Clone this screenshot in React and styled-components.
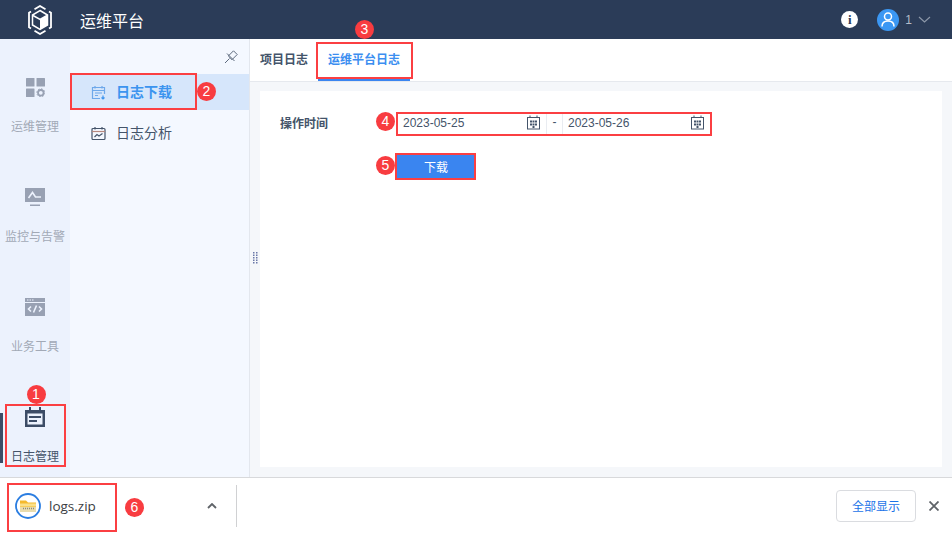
import React from "react";
import styled, { createGlobalStyle } from "styled-components";

const GlobalStyle = createGlobalStyle`
  html, body {
    margin: 0;
    padding: 0;
    background: #f5f7fa;
    font-family: "Liberation Sans", "Noto Sans CJK SC", sans-serif;
  }
  * { box-sizing: border-box; }
`;

const Page = styled.div`
  position: relative;
  width: 952px;
  height: 533px;
  overflow: hidden;
  display: flex;
  flex-direction: column;
`;

const Header = styled.header`
  height: 39px;
  flex: none;
  background: #2b3c58;
  display: flex;
  align-items: center;
  padding: 0 21px 0 28px;
`;

const Logo = styled.div`
  width: 24px;
  height: 30px;
  display: flex;
`;

const Title = styled.h1`
  margin: 0 0 0 28px;
  font-size: 16px;
  font-weight: 400;
  color: #fff;
  flex: 1;
`;

const InfoDot = styled.div`
  width: 17px;
  height: 17px;
  border-radius: 50%;
  background: #fff;
  color: #2b3c58;
  font: bold 13px/17px "Liberation Serif", serif;
  text-align: center;
  margin-right: 19px;
`;

const Avatar = styled.div`
  width: 22px;
  height: 22px;
  border-radius: 50%;
  background: #3b97f3;
  display: flex;
  align-items: center;
  justify-content: center;
`;

const UserName = styled.span`
  color: #b4bcc9;
  font-size: 12px;
  margin: 0 6px 0 6px;
`;

const Body = styled.div`
  flex: 1;
  min-height: 0;
  display: flex;
`;

const Rail = styled.nav`
  width: 70px;
  flex: none;
  background: #ecf2fd;
  padding-top: 35px;
  display: flex;
  flex-direction: column;
`;

const RailItem = styled.div`
  position: relative;
  height: 110px;
  flex: none;
  display: flex;
  flex-direction: column;
  align-items: center;
  color: ${(p) => (p.$active ? "#44546a" : "#a2a9b6")};
  font-size: 12px;

  ${(p) =>
    p.$active &&
    `&::before {
      content: "";
      position: absolute;
      left: 0;
      top: 9px;
      width: 3px;
      height: 50px;
      background: #3c4c66;
    }`}
`;

const RailIcon = styled.div`
  width: 22px;
  height: 26px;
  margin-bottom: 17px;
  display: flex;
  align-items: center;
  justify-content: center;
`;

const SideMenu = styled.aside`
  width: 180px;
  flex: none;
  background: #f4f8ff;
  border-right: 1px solid #e3e7ee;
  display: flex;
  flex-direction: column;
`;

const PinRow = styled.div`
  height: 35px;
  display: flex;
  align-items: center;
  justify-content: flex-end;
  padding: 0 11px 0 0;
`;

const MenuItem = styled.div`
  height: 36px;
  margin-bottom: 5px;
  padding-left: 21px;
  display: flex;
  align-items: center;
  gap: 10px;
  font-size: 14px;
  font-weight: ${(p) => (p.$active ? 700 : 400)};
  color: ${(p) => (p.$active ? "#3c94ef" : "#44546a")};
  background: ${(p) => (p.$active ? "#d6e6fb" : "transparent")};
`;

const MenuLabel = styled.span`
  position: relative;
  top: -1px;
`;

const Main = styled.main`
  position: relative;
  flex: 1;
  min-width: 0;
  display: flex;
  flex-direction: column;
  background: #f5f7fa;
`;

const Tabs = styled.div`
  height: 43px;
  flex: none;
  background: #fff;
  border-bottom: 1px solid #e6e9ee;
  display: flex;
  padding-left: 1px;
`;

const Tab = styled.div`
  height: 42px;
  padding: 0 ${(p) => (p.$active ? "10px" : "9px")} 2px;
  margin-left: ${(p) => (p.$first ? "0" : "1px")};
  display: flex;
  align-items: center;
  font-size: 12px;
  font-weight: 700;
  color: ${(p) => (p.$active ? "#3c8ef0" : "#44546a")};
  border-bottom: 2px solid ${(p) => (p.$active ? "#3a85f0" : "transparent")};
`;

const Card = styled.section`
  flex: 1;
  margin: 9px 10px 10px;
  background: #fff;
  padding: 21px 0 0 20px;
`;

const FormRow = styled.div`
  display: flex;
  align-items: center;
  height: 23px;
`;

const FieldLabel = styled.label`
  width: 117px;
  font-size: 12px;
  font-weight: 700;
  color: #44546a;
  position: relative;
  top: -1px;
`;

const RangeBox = styled.div`
  width: 314px;
  height: 23px;
  display: flex;
  align-items: center;
  border: 1px solid #e6e9ee;
`;

const DateField = styled.div`
  width: ${(p) => p.$w}px;
  height: 100%;
  padding: 0 5px 2px 5px;
  display: flex;
  align-items: center;
  justify-content: space-between;
  font-size: 12px;
  color: #44546a;
`;

const Dash = styled.div`
  width: 17px;
  height: 100%;
  flex: none;
  text-align: center;
  font-size: 12px;
  line-height: 19px;
  color: #44546a;
  border-left: 1px solid #e9ecf1;
  border-right: 1px solid #e9ecf1;
`;

const Download = styled.button`
  display: block;
  width: 79px;
  height: 25px;
  margin: 19px 0 0 117px;
  padding: 0 1px 1px 0;
  border: 0;
  background: #3a85f0;
  color: #fff;
  font: 12px "Liberation Sans", "Noto Sans CJK SC", sans-serif;
`;

const DragHandle = styled.svg`
  position: absolute;
  left: 3px;
  top: 213px;
`;

const DownloadBar = styled.footer`
  height: 56px;
  flex: none;
  background: #fff;
  border-top: 1px solid #d8d9db;
  display: flex;
  align-items: center;
  padding: 0 13px 0 15px;
`;

const FileName = styled.span`
  margin-left: 8px;
  width: 158px;
  font: 13.5px "Open Sans", sans-serif;
  color: #3c4043;
`;

const BarDivider = styled.div`
  width: 1px;
  height: 42px;
  background: #d0d1d3;
  margin-left: 19px;
  margin-right: auto;
`;

const ShowAll = styled.button`
  width: 80px;
  height: 32px;
  padding: 0;
  background: #fff;
  border: 1px solid #dadce0;
  border-radius: 4px;
  color: #1a73e8;
  font: 12px "Liberation Sans", "Noto Sans CJK SC", sans-serif;
  margin-right: 13px;
`;

const RedBox = styled.div`
  position: absolute;
  left: ${(p) => p.$x}px;
  top: ${(p) => p.$y}px;
  width: ${(p) => p.$w}px;
  height: ${(p) => p.$h}px;
  border: 2px solid #fb3f42;
`;

const Badge = styled.div`
  position: absolute;
  left: ${(p) => p.$x - 9.5}px;
  top: ${(p) => p.$y - 9.5}px;
  width: 19px;
  height: 19px;
  border-radius: 50%;
  background: #f83c40;
  color: #fff;
  font-size: 14px;
  line-height: 19px;
  text-align: center;
`;

const CalendarIcon = () => (
  <svg width="15" height="15" viewBox="0 0 15 15" fill="none">
    <rect x="1.500" y="2.500" width="12" height="11.500" stroke="#44546a" />
    <path d="M4 0.500v2.500M11 0.500v2.500" stroke="#44546a" />
    <path d="M4 5.500h2v2H4zM6.500 5.500h2v2h-2zM9 5.500h2v2H9zM4 8.500h2v2H4zM6.500 8.500h2v2h-2zM9 8.500h2v2H9zM6.500 11h2v2h-2z" fill="#44546a" />
  </svg>
);

const Cube = () => (
  <svg width="24" height="30" viewBox="0 0 24 30" fill="none">
    <path d="M6.500 4.200 12 1l5.500 3.200M21 6.500l2 1.200v14.600l-2 1.200M17.500 25.800 12 29l-5.500-3.200M3 23.500l-2-1.200V7.700l2-1.200" stroke="#fff" strokeWidth="1.800" />
    <path d="M12 5.500 19.500 10v10L12 24.500 4.500 20V10z" stroke="#fff" strokeWidth="1.500" />
    <path d="M5 10.500 12 14.500 19 10.500" stroke="#fff" strokeWidth="1.500" />
    <path d="M12 14.500 19.500 10v10L12 24.500z" fill="#fff" />
  </svg>
);

const App = () => (
  <Page>
    <GlobalStyle />
    <Header>
      <Logo>
        <Cube />
      </Logo>
      <Title>运维平台</Title>
      <InfoDot>i</InfoDot>
      <Avatar>
        <svg width="14" height="15" viewBox="0 0 14 15" fill="none" stroke="#fff" strokeWidth="1.500">
          <circle cx="7" cy="4.500" r="3.500" />
          <path d="M1 14.500c0-3.500 2.500-5.500 6-5.500s6 2 6 5.500" />
        </svg>
      </Avatar>
      <UserName>1</UserName>
      <svg width="13" height="7" viewBox="0 0 13 7" fill="none" stroke="#8c97a8" strokeWidth="1.200">
        <path d="M1 1l5.500 5L12 1" />
      </svg>
    </Header>

    <Body>
      <Rail>
        <RailItem>
          <RailIcon>
            <svg width="19" height="19" viewBox="0 0 19 19" fill="#98a1b3">
              <rect x="0" y="0" width="8.500" height="8.500" rx="0.500" />
              <rect x="10.500" y="0" width="8.500" height="8.500" rx="0.500" />
              <rect x="0" y="10.500" width="8.500" height="8.500" rx="0.500" />
              <circle cx="14.800" cy="14.800" r="2.800" fill="none" stroke="#98a1b3" strokeWidth="1.800" />
              <circle cx="14.800" cy="14.800" r="4" fill="none" stroke="#98a1b3" strokeWidth="1" strokeDasharray="1.500 1.600" />
            </svg>
          </RailIcon>
          运维管理
        </RailItem>
        <RailItem>
          <RailIcon>
            <svg width="20" height="18" viewBox="0 0 20 18" fill="#98a1b3">
              <path d="M0 0h20v14H0z" />
              <path d="M5 16.500h10V18H5z" />
              <path d="M3.500 10 7.500 4.500 10.500 9H16" fill="none" stroke="#ecf2fd" strokeWidth="1.600" />
            </svg>
          </RailIcon>
          监控与告警
        </RailItem>
        <RailItem>
          <RailIcon>
            <svg width="20" height="18" viewBox="0 0 20 18" fill="#98a1b3">
              <path d="M0 0h20v4H0zM0 5h20v13H0z" />
              <path d="M2 1.500h1.500v1H2zM4.500 1.500H6v1H4.500zM7 1.500h1.500v1H7z" fill="#ecf2fd" />
              <path d="M6 8.500 3.500 11 6 13.500M14 8.500l2.500 2.500L14 13.500M11.500 7.500l-3 7" fill="none" stroke="#ecf2fd" strokeWidth="1.600" />
            </svg>
          </RailIcon>
          业务工具
        </RailItem>
        <RailItem $active>
          <RailIcon>
            <svg width="20" height="20" viewBox="0 0 20 20" fill="#3c4c66">
              <path d="M0 3h4V0h2v3h8V0h2v3h4v17H0zM2.500 6.500v11h15v-11z" fillRule="evenodd" />
              <path d="M4 9h12v2H4zM4 13h8v2H4z" />
            </svg>
          </RailIcon>
          日志管理
        </RailItem>
      </Rail>

      <SideMenu>
        <PinRow>
          <svg width="14" height="14" viewBox="0 0 14 14" fill="none" stroke="#5d6a7d" strokeWidth="1">
            <path d="M9.500 0.800 13.200 4.500 8 9.700 4.300 6z" />
            <path d="M3 3.500 10.500 11" />
            <path d="M5.500 8.500 1 13" />
          </svg>
        </PinRow>
        <MenuItem $active>
          <svg width="15" height="15" viewBox="0 0 15 15" fill="none" stroke="#6ea8ea" strokeWidth="1.200">
            <path d="M9 13.500H1.500v-11h12V9M1.500 5.500h12M4 1v2.500M11 1v2.500M4 8h7M4 10.500h3" />
            <path d="M12 10.500V14M10.500 12.500 12 14l1.500-1.500" stroke="#3c94ef" />
          </svg>
          <MenuLabel>日志下载</MenuLabel>
        </MenuItem>
        <MenuItem>
          <svg width="15" height="15" viewBox="0 0 15 15" fill="none" stroke="#44546a" strokeWidth="1.200">
            <rect x="1" y="2.500" width="13" height="11" rx="1" />
            <path d="M1 5.500h13" stroke="#b5887f" />
            <path d="M4 1v2.500M11 1v2.500" />
            <path d="M3.500 11 6 8.500 8 10l3.500-2.500" />
          </svg>
          <MenuLabel>日志分析</MenuLabel>
        </MenuItem>
      </SideMenu>

      <Main>
        <Tabs>
          <Tab $first>项目日志</Tab>
          <Tab $active>运维平台日志</Tab>
        </Tabs>
        <Card>
          <FormRow>
            <FieldLabel>操作时间</FieldLabel>
            <RangeBox>
              <DateField $w={148}>
                2023-05-25
                <CalendarIcon />
              </DateField>
              <Dash>-</Dash>
              <DateField $w={147}>
                2023-05-26
                <CalendarIcon />
              </DateField>
            </RangeBox>
          </FormRow>
          <Download>下载</Download>
        </Card>
        <DragHandle width="6" height="13" viewBox="0 0 6 13" fill="#6b78a8">
          {[0, 2.5, 5, 7.5, 10].map((y) => (
            <g key={y}>
              <rect x="0" y={y} width="1.500" height="1.500" />
              <rect x="3" y={y} width="1.500" height="1.500" />
            </g>
          ))}
        </DragHandle>
      </Main>
    </Body>

    <DownloadBar>
      <svg width="26" height="26" viewBox="0 0 26 26" fill="none">
        <circle cx="13" cy="13" r="12" stroke="#2a7de1" strokeWidth="1.800" />
        <path d="M5 7.500h6l2 2h8V19H5z" fill="#f4b92e" />
        <path d="M5 10.500h16v3H5z" fill="#fbe08a" />
        <path d="M5 14h16v5H5z" fill="#e9dcae" />
        <path d="M8 15.500h11" stroke="#8d8a7c" strokeWidth="1.500" strokeDasharray="1 1" />
      </svg>
      <FileName>logs.zip</FileName>
      <svg width="10" height="6" viewBox="0 0 10 6" fill="none" stroke="#5f6368" strokeWidth="1.800">
        <path d="M1 5l4-4 4 4" />
      </svg>
      <BarDivider />
      <ShowAll>全部显示</ShowAll>
      <svg width="10" height="10" viewBox="0 0 10 10" fill="none" stroke="#5f6368" strokeWidth="1.800">
        <path d="M0.500 0.500l9 9M9.500 0.500l-9 9" />
      </svg>
    </DownloadBar>

    <RedBox $x={5} $y={404} $w={61} $h={63} />
    <RedBox $x={70} $y={73} $w={127} $h={37} />
    <RedBox $x={316} $y={42} $w={97} $h={37} />
    <RedBox $x={396} $y={112} $w={316} $h={24} />
    <RedBox $x={395} $y={153} $w={81} $h={27} />
    <RedBox $x={7} $y={483} $w={110} $h={49} />
    <Badge $x={36} $y={394.5}>1</Badge>
    <Badge $x={206.5} $y={91.5}>2</Badge>
    <Badge $x={364.5} $y={29.5}>3</Badge>
    <Badge $x={385.5} $y={121}>4</Badge>
    <Badge $x={385.5} $y={165.5}>5</Badge>
    <Badge $x={134.5} $y={507}>6</Badge>
  </Page>
);

export default App;
